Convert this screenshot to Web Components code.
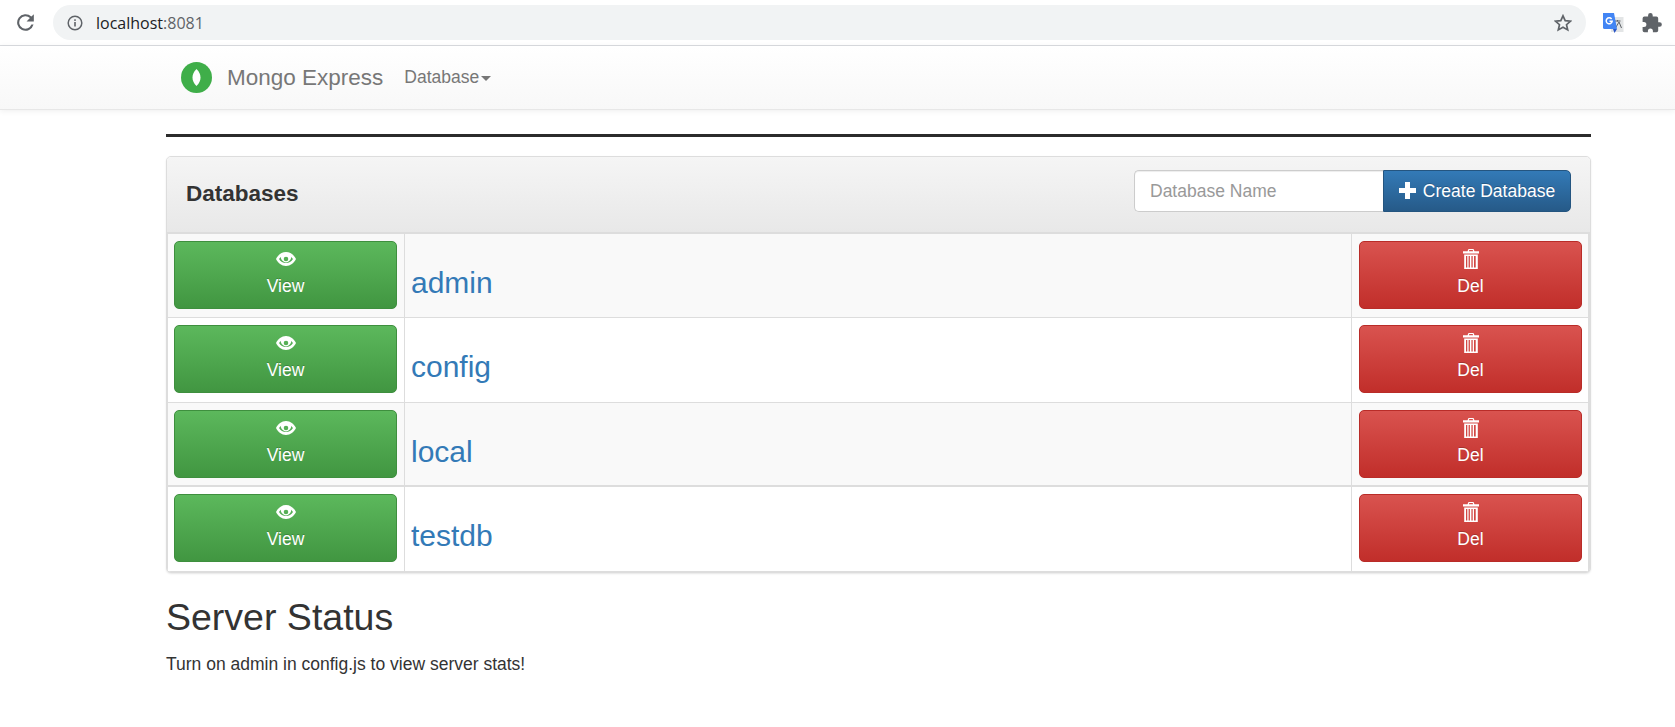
<!DOCTYPE html>
<html>
<head>
<meta charset="utf-8">
<title>Mongo Express</title>
<style>
  html, body { margin: 0; padding: 0; background: #fff; }
  body { font-family: "Liberation Sans", Arial, sans-serif; font-size: 17.5px; color: #333; }
</style>
</head>
<body>

<browser-bar url-host="localhost" url-port=":8081"></browser-bar>
<app-navbar brand="Mongo Express">
  <nav-dropdown>Database</nav-dropdown>
</app-navbar>

<page-content>
  <db-panel title="Databases">
    <db-row name="admin" striped></db-row>
    <db-row name="config"></db-row>
    <db-row name="local" striped></db-row>
    <db-row name="testdb"></db-row>
  </db-panel>
  <server-status heading="Server Status">Turn on admin in config.js to view server stats!</server-status>
</page-content>

<script>
const ICONS = {
  eye: `<svg width="20" height="20" viewBox="0 -3 20 20"><path fill="#fff" fill-rule="evenodd" d="M10 0C5.600 0 2 3 0 7c2 4 5.600 7 10 7s8-3 10-7c-2-4-5.600-7-10-7zM10 2.900c-3 0-5.400 1.600-7 4.100 1.600 2.500 4 4.100 7 4.100s5.400-1.600 7-4.100c-1.600-2.500-4-4.100-7-4.100z"/><path fill="#fff" fill-rule="evenodd" d="M5.800 2.500a5 5 0 1 0 8.400 0a9.500 9.500 0 0 0-8.400 0zM10 4.700a2.300 2.300 0 1 1 0 4.600a2.300 2.300 0 0 1 0-4.600z"/></svg>`,
  trash: `<svg width="16" height="20" viewBox="0 0 16 20"><path fill="#fff" fill-rule="evenodd" d="M5.500 0h5l1 2.200H16v2.300H0V2.200h4.500zM6.300 1l-.4 1.200h4.200L9.700 1zM1.200 5.500h13.600V20H1.200zM3 7v11.600h1.300V7zM5.600 7v11.600h1.300V7zM8.400 7v11.600h1.300V7zM11 7v11.600h1.700V7z"/></svg>`,
  plus: `<svg width="17" height="17" viewBox="0 0 17 17"><path fill="#fff" d="M6 0h5v6h6v5h-6v6H6v-6H0V6h6z"/></svg>`
};

class BrowserBar extends HTMLElement {
  connectedCallback() {
    const root = this.attachShadow({ mode: 'open' });
    root.innerHTML = `
      <style>
        :host { display: flex; align-items: center; height: 45px; background: #fff; border-bottom: 1px solid #dadce0; box-sizing: content-box; font-family: "Open Sans", sans-serif; }
        .reload { margin-left: 13px; width: 25px; height: 25px; flex: none; }
        .omnibox { flex: none; margin-left: 15px; width: 1533px; height: 35px; border-radius: 18px; background: #f1f3f4; display: flex; align-items: center; box-sizing: border-box; padding-left: 14px; }
        .host { color: #202124; font-size: 16px; margin-left: 13px; }
        .port { color: #5f6368; font-size: 16px; }
        .star { margin-left: auto; margin-right: 14px; }
        .ext { display: flex; align-items: center; flex: none; }
        .translate { margin-left: 16px; }
        .puzzle { margin-left: 18px; }
      </style>
      <svg class="reload" viewBox="0 0 24 24"><path fill="#5f6368" d="M17.650 6.350A8 8 0 1 0 19.730 14h-2.080a6 6 0 1 1-1.410-6.240L13 11h7V4z"/></svg>
      <div class="omnibox">
        <svg width="16" height="16" viewBox="0 0 16 16"><circle cx="8" cy="8" r="6.800" fill="none" stroke="#5f6368" stroke-width="1.500"/><rect x="7.200" y="7" width="1.600" height="4.500" fill="#5f6368"/><rect x="7.200" y="4.300" width="1.600" height="1.600" fill="#5f6368"/></svg>
        <span class="host">${this.getAttribute('url-host')}</span><span class="port">${this.getAttribute('url-port')}</span>
        <svg class="star" width="18" height="18" viewBox="0 0 18 18"><path fill="none" stroke="#5f6368" stroke-width="1.700" d="M9 1.800l2.200 4.900 5.300.5-4 3.500 1.200 5.200L9 13.200l-4.700 2.700 1.200-5.200-4-3.500 5.300-.5z"/></svg>
      </div>
      <div class="ext">
        <svg class="translate" width="22" height="22" viewBox="0 0 22 22">
          <rect x="9" y="5" width="12.500" height="15" fill="#e3e5e6"/>
          <path fill="none" stroke="#5f6368" stroke-width="1" d="M12.500 9h6M15.500 8v1.500M13.500 16l3.500-6 2.500 6"/>
          <path fill="#4285f4" d="M1 1h11l3 16H2.500A1.500 1.500 0 0 1 1 15.500z"/>
          <path fill="#2a56c6" d="M11 17h4l-2.500 4z"/>
          <path fill="none" stroke="#fff" stroke-width="1.500" d="M9.600 7a3 3 0 1 0 .6 2.200H7.500"/>
        </svg>
        <svg class="puzzle" width="20" height="20" viewBox="0 0 20 20"><path fill="#5f6368" d="M17.600 9.200h-1.400V5.400a1.800 1.800 0 0 0-1.800-1.800h-3.700V2.300a2.300 2.300 0 0 0-4.600 0v1.300H2.400A1.800 1.800 0 0 0 .6 5.400v3.500h1.300a2.500 2.500 0 0 1 0 5H.6v3.500a1.800 1.800 0 0 0 1.800 1.800h3.500v-1.300a2.500 2.500 0 0 1 5 0v1.300h3.500a1.800 1.800 0 0 0 1.800-1.800v-3.700h1.400a2.250 2.250 0 0 0 0-4.500z"/></svg>
      </div>`;
  }
}

class AppNavbar extends HTMLElement {
  connectedCallback() {
    const root = this.attachShadow({ mode: 'open' });
    root.innerHTML = `
      <style>
        :host { display: flex; align-items: center; height: 63px; box-sizing: content-box; padding-left: 181px; background: linear-gradient(to bottom, #fff 0, #f8f8f8 100%); border-bottom: 1px solid #e7e7e7; box-shadow: 0 1px 6px rgba(0,0,0,.07); }
        .logo { width: 31px; height: 31px; flex: none; }
        .brand { margin-left: 15px; font-size: 22.500px; color: #777; }
        .items { margin-left: 21px; display: flex; align-items: center; }
      </style>
      <svg class="logo" viewBox="0 0 31 31"><circle cx="15.500" cy="15.500" r="15.500" fill="#3fae49"/><path fill="#fff" d="M15.500 7c2.800 2.800 4 5.600 4 8.500s-1.200 5.700-4 8.500c-2.800-2.800-4-5.600-4-8.500s1.200-5.700 4-8.500z"/></svg>
      <span class="brand">${this.getAttribute('brand')}</span>
      <div class="items"><slot></slot></div>`;
  }
}

class NavDropdown extends HTMLElement {
  connectedCallback() {
    const root = this.attachShadow({ mode: 'open' });
    root.innerHTML = `
      <style>
        :host { display: inline-flex; align-items: center; color: #777; font-size: 17.500px; }
        .caret { margin-left: 2px; margin-top: 2px; width: 0; height: 0; border-top: 5px solid #777; border-left: 5px solid transparent; border-right: 5px solid transparent; }
      </style>
      <slot></slot><span class="caret"></span>`;
  }
}

class PageContent extends HTMLElement {
  connectedCallback() {
    const root = this.attachShadow({ mode: 'open' });
    root.innerHTML = `
      <style>
        :host { display: block; margin: 0 84px 0 166px; }
        hr { height: 3px; margin: 24px 0 19px; border: 0; background: #2b2b2b; }
      </style>
      <hr>
      <slot></slot>`;
  }
}

class DbPanel extends HTMLElement {
  connectedCallback() {
    const root = this.attachShadow({ mode: 'open' });
    root.innerHTML = `
      <style>
        :host { display: block; border: 1px solid #ddd; border-radius: 5px; box-shadow: 0 1px 2px rgba(0,0,0,.1); background: #fff; overflow: hidden; box-sizing: border-box; height: 417px; }
        .heading { display: flex; align-items: center; justify-content: space-between; box-sizing: border-box; height: 77px; padding: 0 19px 0 19px; background: linear-gradient(to bottom, #f5f5f5 0, #e8e8e8 100%); border-bottom: 2px solid #ddd; }
        h3 { margin: 0 0 2px; font-size: 22.500px; font-weight: bold; color: #333; }
        form { display: flex; margin: 0 0 8px; }
        input { box-sizing: border-box; width: 249px; height: 42px; padding: 2px 15px 0; font: inherit; font-size: 17.500px; border: 1px solid #ccc; border-right: 0; border-radius: 5px 0 0 5px; background: #fff; outline: 0; box-shadow: inset 0 1px 1px rgba(0,0,0,.075); }
        input::placeholder { color: #999; opacity: 1; }
        .rows { border-right: 2px solid #ddd; border-left: 1px solid #ddd; }
        app-button span { padding-top: 2px; }
      </style>
      <div class="heading">
        <h3>${this.getAttribute('title')}</h3>
        <form>
          <input placeholder="Database Name">
          <app-button variant="primary" inline>${ICONS.plus}<span>Create Database</span></app-button>
        </form>
      </div>
      <div class="rows"><slot></slot></div>`;
    this.removeAttribute('title');
  }
}

class AppButton extends HTMLElement {
  connectedCallback() {
    const root = this.attachShadow({ mode: 'open' });
    root.innerHTML = `
      <style>
        :host { display: flex; box-sizing: border-box; color: #fff; font-size: 17.500px; border-radius: 5px; border: 1px solid; text-shadow: 0 -1px 0 rgba(0,0,0,.2); }
        :host([variant=success]) { background: linear-gradient(to bottom, #5cb85c 0, #419641 100%); border-color: #3e8f3e; }
        :host([variant=danger]) { background: linear-gradient(to bottom, #d9534f 0, #c12e2a 100%); border-color: #b92c28; }
        :host([variant=primary]) { background: linear-gradient(to bottom, #337ab7 0, #265a88 100%); border-color: #245580; border-radius: 0 5px 5px 0; width: 188px; height: 42px; align-items: center; justify-content: center; gap: 7px; }
        :host(:not([inline])) { flex-direction: column; align-items: center; height: 68px; padding-top: 7px; gap: 7px; }
        ::slotted(svg) { display: block; flex: none; }
      </style>
      <slot></slot>`;
  }
}

class DbRow extends HTMLElement {
  connectedCallback() {
    const root = this.attachShadow({ mode: 'open' });
    root.innerHTML = `
      <style>
        :host { display: grid; grid-template-columns: 236px 1fr 237px; height: 84.400px; box-sizing: border-box; border-bottom: 1px solid #ddd; }
        :host([striped]) { background: #f9f9f9; }
        :host(:nth-child(3)) { border-bottom-width: 2px; }
        .cell { padding: 7px 7px 0 6px; box-sizing: border-box; }
        .cell + .cell { border-left: 1px solid #ddd; }
        .cell:last-child { padding: 7px 6px 0 7px; }
        h3 { margin: 25px 0 0; font-size: 30px; font-weight: normal; line-height: 33px; }
        a { color: #337ab7; text-decoration: none; }
      </style>
      <div class="cell"><app-button variant="success">${ICONS.eye}<span>View</span></app-button></div>
      <div class="cell"><h3><a href="#">${this.getAttribute('name')}</a></h3></div>
      <div class="cell"><app-button variant="danger">${ICONS.trash}<span>Del</span></app-button></div>`;
  }
}

class ServerStatus extends HTMLElement {
  connectedCallback() {
    const root = this.attachShadow({ mode: 'open' });
    root.innerHTML = `
      <style>
        :host { display: block; }
        h2 { margin: 24px 0 0; font-size: 37.500px; font-weight: normal; line-height: 41px; color: #333; }
        p { margin: 14px 0 0; font-size: 17.500px; line-height: 25px; color: #333; }
      </style>
      <h2>${this.getAttribute('heading')}</h2>
      <p><slot></slot></p>`;
  }
}

customElements.define('app-button', AppButton);
customElements.define('browser-bar', BrowserBar);
customElements.define('app-navbar', AppNavbar);
customElements.define('nav-dropdown', NavDropdown);
customElements.define('page-content', PageContent);
customElements.define('db-panel', DbPanel);
customElements.define('db-row', DbRow);
customElements.define('server-status', ServerStatus);
</script>
</body>
</html>
